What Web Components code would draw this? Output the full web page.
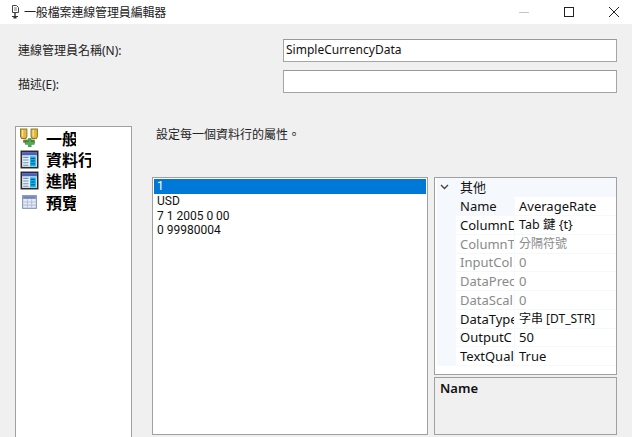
<!doctype html>
<html>
<head>
<meta charset="utf-8">
<style>
  html, body { margin: 0; height: 100%; }
  body {
    width: 632px;
    height: 437px;
    overflow: hidden;
    background: #f0f0f0;
    font: 12px "Noto Sans", "Noto Sans CJK TC", sans-serif;
    color: #111;
  }
</style>
</head>
<body>
<conn-editor>
  <title-bar slot="top">一般檔案連線管理員編輯器</title-bar>
  <form-row slot="top" label="連線管理員名稱(N):" value="SimpleCurrencyData" shift="-1"></form-row>
  <form-row slot="top" label="描述(E):" value="" shift="2"></form-row>
  <nav-list slot="nav"></nav-list>
  <span slot="hint">設定每一個資料行的屬性。</span>
  <data-list slot="data"></data-list>
  <prop-grid slot="props"></prop-grid>
  <desc-box slot="desc">Name</desc-box>
</conn-editor>

<script>
function define(name, html, setup) {
  customElements.define(name, class extends HTMLElement {
    connectedCallback() {
      const shadow = this.attachShadow({ mode: 'open' })
      shadow.innerHTML = html
      if (setup) setup(this, shadow)
    }
  })
}

define('conn-editor', `
  <style>
    :host { display: block; height: 437px; overflow: hidden; }
    .main { display: grid; grid-template-columns: 117px 1fr; column-gap: 20px; padding: 0 15px; margin-top: 33px; }
    .side { display: grid; grid-template-columns: 276px 183px; column-gap: 6px; grid-template-rows: 198px 58px; row-gap: 2px; margin-top: 50px; }
    .hint { height: 0; padding-top: 1px; color: #222; line-height: 16px; padding-left: 4px; }
    .data { grid-row: 1 / 3; }
  </style>
  <slot name="top"></slot>
  <div class="main">
    <slot name="nav"></slot>
    <div>
      <div class="hint"><slot name="hint"></slot></div>
      <div class="side">
        <div class="data"><slot name="data"></slot></div>
        <slot name="props"></slot>
        <slot name="desc"></slot>
      </div>
    </div>
  </div>
`)

define('title-bar', `
  <style>
    :host { display: flex; align-items: center; height: 24px; background: #fff; padding-left: 8px; color: #222; font-size: 12px; }
    svg { flex: none; }
    .plug { margin: 0 4px 0 2px; }
    .text { flex: 1; letter-spacing: -.15px; }
    .btn { width: 45px; display: flex; justify-content: center; }
    .close { width: 36px; margin-left: 5px; }
  </style>
  <svg class="plug" width="10" height="16" viewBox="0 0 10 16">
    <path d="M2.500 1.500h4l2 2v5h-6z" fill="#fff" stroke="#444"/>
    <path d="M4 4h3M4 6h3" stroke="#777"/>
    <path d="M5 9v3" stroke="#333" stroke-width="1.400"/>
    <path d="M2 12.500h6" stroke="#333"/>
    <rect x="3.500" y="12" width="3" height="2.500" fill="#333"/>
  </svg>
  <span class="text"><slot></slot></span>
  <span class="btn"><svg width="12" height="12"><path d="M1 6.500h10" stroke="#c4c4c4"/></svg></span>
  <span class="btn"><svg width="12" height="12"><rect x="1.500" y="1.500" width="9" height="9" fill="none" stroke="#222"/></svg></span>
  <span class="btn close"><svg width="12" height="12"><path d="M1 1l10 10M11 1L1 11" stroke="#222"/></svg></span>
`)

define('form-row', `
  <style>
    :host { display: grid; grid-template-columns: 265px 334px; padding-left: 18px; height: 23px; margin-top: 8px; align-items: center; color: #222; }
    :host(:first-of-type) { margin-top: 15px; }
    .box { height: 21px; border: 1px solid #a5a5a5; border-top-color: #999; background: #fff; line-height: 20px; padding-left: 2px; color: #111; box-sizing: content-box; }
  </style>
  <span class="label"></span>
  <div class="box"></div>
`, (el, shadow) => {
  const label = shadow.querySelector('.label')
  label.textContent = el.getAttribute('label')
  const shift = Number(el.getAttribute('shift'))
  // the labels don't sit centred on their inputs in the original dialog
  label.style[shift < 0 ? 'paddingBottom' : 'paddingTop'] = Math.abs(shift) * 2 + 'px'
  shadow.querySelector('.box').textContent = el.getAttribute('value')
})

const pageIcon = `<svg width="19" height="19" viewBox="0 0 18 18">
  <rect x=".5" y=".5" width="17" height="17" fill="#2a2a2a"/>
  <rect x="2" y="2" width="14" height="14" fill="#e8eef6"/>
  <rect x="2" y="2" width="14" height="3" fill="#4a5fc0"/>
  <path d="M3 7h5M3 9.500h5M3 12h5M3 14.500h5" stroke="#6f93b8"/>
  <rect x="9.500" y="6" width="5.500" height="9.500" fill="#09b8e8"/>
  <path d="M10.500 8h3.500M10.500 10.500h3.500M10.500 13h3.500" stroke="#0a3f8c"/>
</svg>`

define('nav-list', `
  <style>
    :host { display: block; height: 330px; background: #fff; border: 1px solid #a0a0a0; box-sizing: border-box; padding-top: 1px; }
    .row { display: flex; align-items: center; height: 19.500px; margin-bottom: 2px; padding-left: 4px; }
    .icon { width: 19px; height: 19px; flex: none; margin-right: 7px; }
    .text { display: block; overflow: hidden; white-space: nowrap; font: bold 16px/20px "Noto Sans CJK TC", sans-serif; color: #000; }
    .active { background: #f5f5f5; margin-left: -3px; padding-left: 3px; line-height: 21px; }
  </style>
  <div class="row">
    <span class="icon"><svg width="19" height="19" viewBox="0 0 18 18">
      <path d="M.5 1h6v7l-1 2h-4l-1-2z" fill="#e3b93c" stroke="#8d7a2c"/>
      <path d="M10.500 1h6v7l-1 2h-4l-1-2z" fill="#e3b93c" stroke="#8d7a2c"/>
      <path d="M2.500 2v6M12.500 2v6" stroke="#f8eaa8"/>
      <path d="M3 11h11v3H3z" fill="#80703c"/>
      <path d="M5 13h3v-3h2.500v3h3v2.500h-3v2.500H8v-2.500H5z" fill="#4bb356" stroke="#2f7f3a" stroke-width=".6"/>
    </svg></span>
    <span class="text" style="width:30px">一般</span>
  </div>
  <div class="row">
    <span class="icon">${pageIcon}</span>
    <span class="text" style="width:45px">資料行</span>
  </div>
  <div class="row">
    <span class="icon">${pageIcon}</span>
    <span class="text active" style="width:30px">進階</span>
  </div>
  <div class="row">
    <span class="icon"><svg width="19" height="19" viewBox="0 0 18 18">
      <rect x="2.500" y="2.500" width="13" height="12" fill="#e6ecf6" stroke="#7f8fb0"/>
      <rect x="3" y="3" width="12" height="2.500" fill="#6d82b8"/>
      <path d="M3 8.500h12M3 11.500h12M7 6v8M11 6v8" stroke="#b4c2dc"/>
    </svg></span>
    <span class="text" style="width:30px">預覽</span>
  </div>
`)

define('data-list', `
  <style>
    :host { display: block; height: 258px; background: #fff; border: 1px solid #a0a0a0; box-sizing: border-box; padding: 1px; font-family: Roboto, sans-serif; }
    div { height: 14.800px; line-height: 14.800px; padding-left: 3px; color: #111; white-space: pre; }
    .sel { background: #0078d7; color: #fff; }
  </style>
  <div class="sel">1</div>
  <div>USD</div>
  <div>7 1 2005 0 00</div>
  <div>0 99980004</div>
`)

define('prop-grid', `
  <style>
    :host { display: block; background: #fff; border: 1px solid #a0a0a0; box-sizing: border-box; padding-left: 2px; overflow: hidden; font-size: 13px; }
    .group { display: flex; align-items: center; height: 19px; background: #f5f8fc; color: #111; }
    .group span { position: relative; top: -1px; }
    .group svg { margin: 0 11px 2px 3px; }
    .row { display: grid; grid-template-columns: 19px 59px 1fr; height: 18.750px; line-height: 18px; }
    .gut { background: #f5f8fc; }
    .k { overflow: hidden; white-space: nowrap; padding-left: 4px; border-bottom: 1px solid #f5f8fc; border-right: 1px solid #f5f8fc; color: #111; }
    .v { padding-left: 4px; white-space: nowrap; border-bottom: 1px solid #f5f8fc; color: #111; }
    .off .k, .off .v { color: #8a8a8a; }
    .first .k { background: #f5f8fc; }
  </style>
  <div class="group">
    <svg width="9" height="6"><path d="M1 1l3.500 3.500L8 1" fill="none" stroke="#444" stroke-width="1.400"/></svg>
    <span>其他</span>
  </div>
  <div id="rows"></div>
`, (el, shadow) => {
  const rows = [
    ['Name', 'AverageRate', 'first'],
    ['ColumnD', 'Tab 鍵 {t}', '', '12.5px'],
    ['ColumnT', '分隔符號', 'off', '12px'],
    ['InputCol', '0', 'off'],
    ['DataPrec', '0', 'off'],
    ['DataScal', '0', 'off'],
    ['DataType', '字串 [DT_STR]', '', '12px'],
    ['OutputC', '50'],
    ['TextQual', 'True']
  ]
  const box = shadow.getElementById('rows')
  rows.forEach(([k, v, cls, size]) => {
    const row = document.createElement('div')
    row.className = 'row ' + (cls || '')
    row.innerHTML = '<span class="gut"></span><span class="k"></span><span class="v"></span>'
    row.querySelector('.k').textContent = k
    row.querySelector('.v').textContent = v
    if (size) row.querySelector('.v').style.fontSize = size
    box.appendChild(row)
  })
})

define('desc-box', `
  <style>
    :host { display: block; border: 1px solid #a0a0a0; box-sizing: border-box; padding: 1px 5px; font-size: 13px; font-weight: 600; color: #111; }
  </style>
  <slot></slot>
`)
</script>
</body>
</html>
